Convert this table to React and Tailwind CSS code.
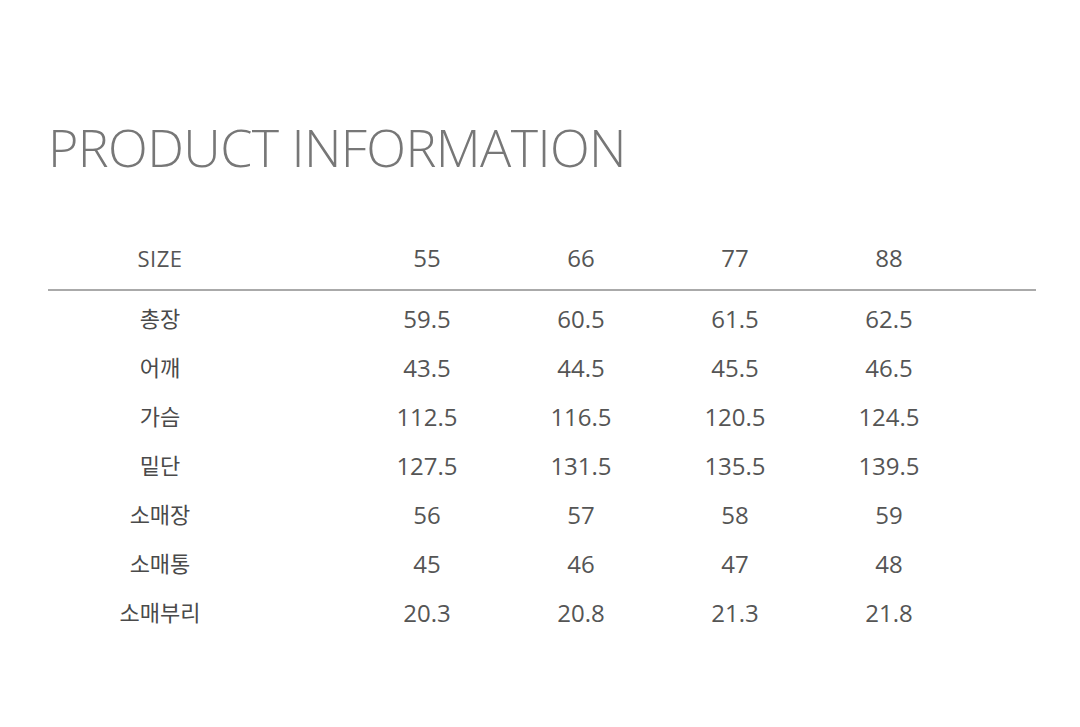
const sizes = ['55', '66', '77', '88'];

const rows = [
  ['총장', '59.5', '60.5', '61.5', '62.5'],
  ['어깨', '43.5', '44.5', '45.5', '46.5'],
  ['가슴', '112.5', '116.5', '120.5', '124.5'],
  ['밑단', '127.5', '131.5', '135.5', '139.5'],
  ['소매장', '56', '57', '58', '59'],
  ['소매통', '45', '46', '47', '48'],
  ['소매부리', '20.3', '20.8', '21.3', '21.8']
];

export default function App() {
  return (
    <div className="h-[727px] w-[1080px] bg-white font-['Open_Sans','Noto_Sans_CJK_KR',sans-serif]">
      <div className="pl-[48px] pt-[112px]">
        <h1 className="text-[52px] font-light leading-[70px] tracking-[-0.6px] text-[#777]">PRODUCT INFORMATION</h1>
      </div>
      <div className="mt-[53px] ml-[48px] w-[988px] text-[24px] font-normal text-[#555]">
        <div className="grid h-[56px] grid-cols-[302px_repeat(4,154px)] items-center border-b-2 border-[#aaa] pb-[8px]">
          <div className="pr-[78px] text-center text-[22px] tracking-[0.5px]">SIZE</div>
          {sizes.map((size) => (
            <div key={size} className="text-center">{size}</div>
          ))}
        </div>
        <div className="pt-[3px]">
          {rows.map(([label, ...values]) => (
            <div key={label} className="grid h-[49px] grid-cols-[302px_repeat(4,154px)] items-center">
              <div className="pr-[78px] text-center text-[22px] text-[#4a4a4a]">{label}</div>
              {values.map((value, i) => (
                <div key={i} className="text-center">{value}</div>
              ))}
            </div>
          ))}
        </div>
      </div>
    </div>
  );
}
